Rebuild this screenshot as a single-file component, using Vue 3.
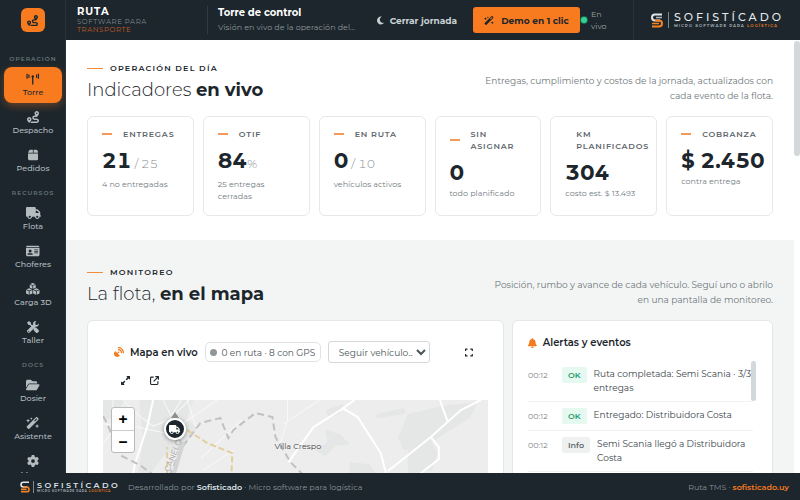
<script setup>
const icons = {
  route: ['0 0 512 512', 'M512 96c0 50.2-59.1 125.1-84.6 155c-3.8 4.4-9.4 6.1-14.5 5H320c-17.7 0-32 14.3-32 32s14.3 32 32 32h96c53 0 96 43 96 96s-43 96-96 96H139.6c8.7-9.9 19.3-22.6 30-36.8c6.3-8.4 12.8-17.6 19-27.2H416c17.7 0 32-14.3 32-32s-14.3-32-32-32H320c-53 0-96-43-96-96s43-96 96-96h39.8c-21-31.5-39.8-67.7-39.8-96c0-53 43-96 96-96s96 43 96 96zM117.1 489.1c-3.8 4.3-7.2 8.1-10.1 11.3l-1.8 2-.2-.2c-6 4.6-14.6 4-20-1.8C59.8 473 0 402.5 0 352c0-53 43-96 96-96s96 43 96 96c0 30-21.1 67-43.5 97.9c-10.7 14.7-21.7 28-30.8 38.5l-.6 .7zM128 352a32 32 0 1 0 -64 0 32 32 0 1 0 64 0zM416 128a32 32 0 1 0 0-64 32 32 0 1 0 0 64z'],
  tower: ['0 0 576 512', 'M20 30h50v210H20zM100 60h50v150h-50zM506 30h50v210h-50zM426 60h50v150h-50zM288 100a56 56 0 0 1 28 104v284h-56V204a56 56 0 0 1 28-104z'],
  box: ['0 0 448 512', 'M50.7 58.5L0 160H208V32H93.7C75.5 32 58.9 42.3 50.7 58.5zM240 160H448L397.3 58.5C389.1 42.3 372.5 32 354.3 32H240V160zm208 32H0V416c0 35.3 28.7 64 64 64H384c35.3 0 64-28.7 64-64V192z'],
  truck: ['0 0 640 512', 'M48 0C21.5 0 0 21.5 0 48V368c0 26.5 21.5 48 48 48H64c0 53 43 96 96 96s96-43 96-96H384c0 53 43 96 96 96s96-43 96-96h32c17.7 0 32-14.3 32-32s-14.3-32-32-32V288 256 237.3c0-17-6.7-33.3-18.7-45.3L512 114.7c-12-12-28.3-18.7-45.3-18.7H416V48c0-26.5-21.5-48-48-48H48zM416 160h50.7L544 237.3V256H416V160zM112 416a48 48 0 1 1 96 0 48 48 0 1 1 -96 0zm368-48a48 48 0 1 1 0 96 48 48 0 1 1 0-96z'],
  card: ['0 0 576 512', 'M64 32C28.7 32 0 60.7 0 96H576c0-35.3-28.7-64-64-64H64zM0 128V416c0 35.3 28.7 64 64 64H512c35.3 0 64-28.7 64-64V128H0zM64 405.3c0-29.5 23.9-53.3 53.3-53.3H234.7c29.5 0 53.3 23.9 53.3 53.3c0 5.9-4.8 10.7-10.7 10.7H74.7c-5.9 0-10.7-4.8-10.7-10.7zM176 192a64 64 0 1 1 0 128 64 64 0 1 1 0-128zm176 16c0-8.8 7.2-16 16-16H496c8.8 0 16 7.2 16 16s-7.2 16-16 16H368c-8.8 0-16-7.2-16-16zm0 64c0-8.8 7.2-16 16-16H496c8.8 0 16 7.2 16 16s-7.2 16-16 16H368c-8.8 0-16-7.2-16-16zm0 64c0-8.8 7.2-16 16-16H496c8.8 0 16 7.2 16 16s-7.2 16-16 16H368c-8.8 0-16-7.2-16-16z'],
  cubes: ['0 0 576 512', 'M288 0l116 44-116 48-116-48zM160 70l112 46v128l-112-46zM416 70v128l-112 46V116zM136 226l120 46-120 50-120-50zM0 300l120 50v150L0 450zM272 300v150l-120 50V350zM440 226l120 46-120 50-120-50zM304 300l120 50v150l-120-50zM576 300v150l-120 50V350z'],
  tools: ['0 0 512 512', 'M78 2L2 78l64 88h58l92 92 42-42-92-92V66zM396 4c-76-14-154 50-136 140L12 392c-34 48 6 116 68 112 14-2 28-8 38-18l244-246c90 18 158-60 142-138l-70 70-68-16-16-68zM76 412a26 26 0 1 1 0 52 26 26 0 0 1 0-52zM292 324l42-42c24-12 54-8 74 12l88 88c22 22 22 52 0 74l-40 40c-20 20-52 20-74 0l-88-88c-22-22-24-58-2-84z'],
  folder: ['0 0 576 512', 'M88.7 223.8L0 375.8V96C0 60.7 28.7 32 64 32H181.5c17 0 33.3 6.7 45.3 18.7l26.5 26.5c12 12 28.3 18.7 45.3 18.7H416c35.3 0 64 28.7 64 64v32H144c-22.8 0-43.8 12.1-55.3 31.8zm27.6 16.1C122.1 230 132.6 224 144 224H544c11.5 0 22 6.1 27.7 16.1s5.7 22.2-.1 32.1l-112 192C453.9 474 443.4 480 432 480H32c-11.5 0-22-6.1-27.7-16.1s-5.7-22.2 .1-32.1l112-192z'],
  wand: ['0 0 576 512', 'M424 12c16-16 40-16 56 0l46 46c16 16 16 40 0 56L144 496c-16 16-40 16-56 0l-46-46c-16-16-16-40 0-56zM452 54l-106 106 32 32L484 86zM224 10l18 44 46 18-46 18-18 46-18-46-46-18 46-18zM88 70l26 58 62 24-62 26-26 62-24-62-64-26 64-24zM472 300l26 62 62 26-62 24-26 64-26-64-62-24 62-26z'],
  gear: ['0 0 512 512', 'M495.9 166.6c3.2 8.7 .5 18.4-6.4 24.6l-43.3 39.4c1.1 8.3 1.7 16.8 1.7 25.4s-.6 17.1-1.7 25.4l43.3 39.4c6.9 6.2 9.6 15.9 6.4 24.6c-4.4 11.9-9.7 23.3-15.8 34.3l-4.7 8.1c-6.6 11-14 21.4-22.1 31.2c-5.9 7.2-15.7 9.6-24.5 6.8l-55.7-17.7c-13.4 10.3-28.2 18.9-44 25.4l-12.5 57.1c-2 9.1-9 16.3-18.2 17.8c-13.8 2.3-28 3.5-42.5 3.5s-28.7-1.2-42.5-3.5c-9.2-1.5-16.2-8.7-18.2-17.8l-12.5-57.1c-15.8-6.5-30.6-15.1-44-25.4L83.1 425.9c-8.8 2.8-18.6 .3-24.5-6.8c-8.1-9.8-15.5-20.2-22.1-31.2l-4.7-8.1c-6.1-11-11.4-22.4-15.8-34.3c-3.2-8.7-.5-18.4 6.4-24.6l43.3-39.4C64.6 273.1 64 264.6 64 256s.6-17.1 1.7-25.4L22.4 191.2c-6.9-6.2-9.6-15.9-6.4-24.6c4.4-11.9 9.7-23.3 15.8-34.3l4.7-8.1c6.6-11 14-21.4 22.1-31.2c5.9-7.2 15.7-9.6 24.5-6.8l55.7 17.7c13.4-10.3 28.2-18.9 44-25.4l12.5-57.1c2-9.1 9-16.3 18.2-17.8C227.3 1.2 241.5 0 256 0s28.7 1.2 42.5 3.5c9.2 1.5 16.2 8.7 18.2 17.8l12.5 57.1c15.8 6.5 30.6 15.1 44 25.4l55.7-17.7c8.8-2.8 18.6-.3 24.5 6.8c8.1 9.8 15.5 20.2 22.1 31.2l4.7 8.1c6.1 11 11.4 22.4 15.8 34.3zM256 336a80 80 0 1 0 0-160 80 80 0 1 0 0 160z'],
  moon: ['0 0 384 512', 'M223.5 32C100 32 0 132.3 0 256S100 480 223.5 480c60.6 0 115.5-24.2 155.8-63.4c5-4.9 6.3-12.5 3.1-18.7s-10.1-9.7-17-8.5c-9.8 1.7-19.8 2.6-30.1 2.6c-96.9 0-175.5-78.8-175.5-176c0-65.8 36-123.1 89.3-153.3c6.1-3.5 9.2-10.5 7.7-17.3s-7.3-11.9-14.3-12.5c-6.3-.5-12.6-.8-19-.8z'],
  bell: ['0 0 448 512', 'M224 0c-17.7 0-32 14.3-32 32V51.2C119 66 64 130.6 64 208v18.8c0 47-17.3 92.4-48.5 127.6l-7.4 8.3c-8.4 9.4-10.4 22.9-5.3 34.4S19.4 416 32 416H416c12.6 0 24-7.4 29.2-18.9s3.1-25-5.3-34.4l-7.4-8.3C401.3 319.2 384 273.9 384 226.8V208c0-77.4-55-142-128-156.8V32c0-17.7-14.3-32-32-32zm45.3 493.3c12-12 18.7-28.3 18.7-45.3H224 160c0 17 6.7 33.3 18.7 45.3s28.3 18.7 45.3 18.7s33.3-6.7 45.3-18.7z'],
  dish: ['0 0 512 512', 'M60 200c-80 84-80 200-10 262 72 68 182 58 258-10L198 342l30-32a42 42 0 1 0-30-28l-30 30zM192 32c0-20 14-32 32-32 160 0 288 128 288 288 0 18-14 32-32 32s-32-14-32-32C448 164 348 64 224 64c-18 0-32-14-32-32zM192 128c0-18 14-32 32-32 106 0 192 86 192 192 0 18-14 32-32 32s-32-14-32-32c0-70-58-128-128-128-18 0-32-14-32-32z'],
  corners: ['0 0 448 512', 'M0 64q0-32 32-32h112v64H64v80H0zM304 32h112q32 0 32 32v112h-64V96h-80zM0 336h64v80h80v64H32q-32 0-32-32zM384 336h64v112q0 32-32 32H304v-64h80z'],
  arrows: ['0 0 512 512', 'M344 0h144c14 0 24 10 24 24v144c0 22-26 32-42 16l-38-38-88 88c-10 10-24 10-34 0l-32-32c-10-10-10-24 0-34l88-88-38-38c-16-16-6-42 16-42zM168 512H24c-14 0-24-10-24-24V344c0-22 26-32 42-16l38 38 88-88c10-10 24-10 34 0l32 32c10 10 10 24 0 34l-88 88 38 38c16 16 6 42-16 42z'],
  external: ['0 0 512 512', 'M304 0h176q32 0 32 32v176h-64v-98L230 328l-46-46L402 64h-98zM80 32h128v64H80q-16 0-16 16v320q0 16 16 16h320q16 0 16-16V304h64v128q0 80-80 80H80q-80 0-80-80V112q0-80 80-80z']
}

const groups = [
  { title: 'Operación', items: [['tower', 'Torre'], ['route', 'Despacho'], ['box', 'Pedidos']] },
  { title: 'Recursos', items: [['truck', 'Flota'], ['card', 'Choferes'], ['cubes', 'Carga 3D'], ['tools', 'Taller']] },
  { title: 'Docs', items: [['folder', 'Dosier'], ['wand', 'Asistente'], ['gear', 'Marca']] }
]

const kpis = [
  { label: 'Entregas', value: '21', unit: '/ 25', note: '4 no entregadas', spaced: true },
  { label: 'OTIF', value: '84', unit: '%', note: '25 entregas cerradas' },
  { label: 'En ruta', value: '0', unit: '/ 10', note: 'vehículos activos', spaced: true },
  { label: 'Sin asignar', value: '0', note: 'todo planificado' },
  { label: 'Km planificados', value: '304', note: 'costo est. $ 13.493', plain: true },
  { label: 'Cobranza', value: '$ 2.450', note: 'contra entrega' }
]

const events = [
  { time: '00:12', kind: 'OK', text: 'Ruta completada: Semi Scania · 3/3 entregas' },
  { time: '00:12', kind: 'OK', text: 'Entregado: Distribuidora Costa' },
  { time: '00:12', kind: 'Info', text: 'Semi Scania llegó a Distribuidora Costa' }
]
</script>

<template>
  <div class="app">
    <div class="body">
      <aside class="side">
        <a class="home" href="#" aria-label="Ruta">
          <svg class="ico" :viewBox="icons.route[0]"><path :d="icons.route[1]" /></svg>
        </a>
        <nav class="nav">
          <template v-for="g in groups" :key="g.title">
            <span class="group">{{ g.title }}</span>
            <a v-for="[icon, name] in g.items" :key="name" href="#" class="item" :class="{ active: name === 'Torre' }">
              <svg class="ico" :viewBox="icons[icon][0]"><path :d="icons[icon][1]" /></svg>
              <span>{{ name }}</span>
            </a>
          </template>
        </nav>
      </aside>

      <div class="column">
        <header class="top">
          <div class="brand">
            <strong>RUTA</strong>
            <span>SOFTWARE PARA</span>
            <em>TRANSPORTE</em>
          </div>
          <div class="where">
            <h1>Torre de control</h1>
            <p>Visión en vivo de la operación del…</p>
          </div>
          <button class="ghost" type="button">
            <svg class="ico" :viewBox="icons.moon[0]"><path :d="icons.moon[1]" /></svg>Cerrar jornada
          </button>
          <button class="demo" type="button">
            <svg class="ico" :viewBox="icons.wand[0]"><path :d="icons.wand[1]" /></svg>Demo en 1 clic
          </button>
          <div class="live"><i></i><span>En vivo</span></div>
          <a class="logo" href="#">
            <svg class="mark" viewBox="0 0 24 30" fill="none" stroke-width="4">
              <path d="M22 3H8Q2 3 2 9t6 6h10" stroke="#dfe5e8" />
              <path d="M22 9H10" stroke="#aeb8bd" stroke-width="3" />
              <path d="M8 15h8q6 0 6 6t-6 6H2" stroke="#f58220" />
              <path d="M2 21h14" stroke="#f58220" stroke-width="3" />
            </svg>
            <span class="words"><b>SOFISTÍCADO</b><small>MICRO SOFTWARE PARA <em>LOGÍSTICA</em></small></span>
          </a>
        </header>

        <div class="frame">
          <main class="main">
            <section class="section">
              <div class="head">
                <div>
                  <p class="eyebrow">Operación del día</p>
                  <h2>Indicadores <b>en vivo</b></h2>
                </div>
                <p class="lead">Entregas, cumplimiento y costos de la jornada, actualizados con cada evento de la flota.</p>
              </div>
              <div class="kpis">
                <article v-for="k in kpis" :key="k.label" class="kpi">
                  <h3 :class="{ plain: k.plain }"><span>{{ k.label }}</span></h3>
                  <p class="value">{{ k.value }}<small v-if="k.unit" :class="{ spaced: k.spaced }">{{ k.unit }}</small></p>
                  <p class="note">{{ k.note }}</p>
                </article>
              </div>
            </section>

            <section class="section tinted">
              <div class="head">
                <div>
                  <p class="eyebrow">Monitoreo</p>
                  <h2>La flota, <b>en el mapa</b></h2>
                </div>
                <p class="lead">Posición, rumbo y avance de cada vehículo. Seguí uno o abrilo en una pantalla de monitoreo.</p>
              </div>
              <div class="panels">
                <article class="panel">
                  <div class="tools">
                    <h3><svg class="ico accent" :viewBox="icons.dish[0]"><path :d="icons.dish[1]" /></svg>Mapa en vivo</h3>
                    <span class="chip"><i></i>0 en ruta · 8 con GPS</span>
                    <select aria-label="Seguir vehículo"><option>Seguir vehículo…</option></select>
                    <button class="tool push" type="button" aria-label="Encuadrar"><svg class="ico" :viewBox="icons.corners[0]"><path :d="icons.corners[1]" /></svg></button>
                    <button class="tool" type="button" aria-label="Ampliar"><svg class="ico" :viewBox="icons.arrows[0]"><path :d="icons.arrows[1]" /></svg></button>
                    <button class="tool" type="button" aria-label="Abrir"><svg class="ico" :viewBox="icons.external[0]"><path :d="icons.external[1]" /></svg></button>
                  </div>
                  <div class="map">
                    <svg class="tiles" viewBox="0 0 384 140" preserveAspectRatio="xMidYMin slice" fill="none">
                      <rect width="384" height="140" fill="#ededed" />
                      <g fill="#e5e6e6">
                        <path d="M36 0h54l-6 18 10 12-14 16-20 10-16 22H34l6-36zM304 14l34-8 36-4-8 16-26 16-14 10-26 6-6-12zM304 50l24-8 6 10-6 18-24 4zM302 14l-30 4 2-4 26-6zM222 30l14 4 10 10-14 2-10 10-10-6 12-8zM222 10l18-6-4 10-10 4z" />
                        <path d="M0 0h22L10 18 0 20zM246 62l20 2 8 12h-28z" />
                      </g>
                      <g stroke="#f8f8f8" stroke-width="1">
                        <path d="M20 0l14 14 16 12 16-6L86 0M60 0l8 16L78 0M0 24l30 2 36 8M64 34l50-34M98 58l40-38M100 70l30-20M184 0v20l-8 26M216 0l-36 24M10 0v30L0 44M84 0l10 30" />
                      </g>
                      <g stroke="#fff" stroke-width="2">
                        <path d="M50 0L44 27 32 63l-4 20M185 62l25-35L237 10l14-10M239 8l15 9 23 36 5 19v20M284 71l43-34 30-27 20-10M327 37l8 10v12l-18 14M336 0l8 22" />
                      </g>
                      <g stroke="#c0c2c2" stroke-width="2" stroke-dasharray="7 4">
                        <path d="M0 16l4 7 13 32 20 10 16 12M66 76l13-29 18-24 20-5 8 20 5-8 22-17 17 4 3 20 15 25 16 16" />
                      </g>
                      <path d="M64 76V47M84 30l20 13 25 10-1 24" stroke="#e3cf9e" stroke-width="2" stroke-dasharray="6 3" />
                      <path d="M70 76l10-34" stroke="#d2d3d3" stroke-width="4" />
                      <text x="171" y="49" font-size="8" fill="#444">Villa Crespo</text>
                      <text x="66" y="72" font-size="8" fill="#a2a2a2" transform="rotate(-68 66 72)">CANELO</text>
                    </svg>
                    <div class="zoom"><button type="button">+</button><button type="button">−</button></div>
                    <div class="pin"><svg class="ico" :viewBox="icons.truck[0]"><path :d="icons.truck[1]" /></svg></div>
                  </div>
                </article>

                <article class="panel alerts">
                  <h3><svg class="ico accent" :viewBox="icons.bell[0]"><path :d="icons.bell[1]" /></svg>Alertas y eventos</h3>
                  <ul>
                    <li v-for="(e, n) in events" :key="n">
                      <time>{{ e.time }}</time>
                      <span class="badge" :class="{ ok: e.kind === 'OK' }">{{ e.kind }}</span>
                      <p>{{ e.text }}</p>
                    </li>
                  </ul>
                  <i class="thumb"></i>
                </article>
              </div>
            </section>
          </main>
          <i class="thumb"></i>
        </div>
      </div>
    </div>

    <footer class="foot">
      <a class="logo small" href="#">
        <svg class="mark" viewBox="0 0 24 30" fill="none" stroke-width="4">
          <path d="M22 3H8Q2 3 2 9t6 6h10" stroke="#dfe5e8" />
          <path d="M8 15h8q6 0 6 6t-6 6H2M2 21h14" stroke="#f58220" />
        </svg>
        <span class="words"><b>SOFISTÍCADO</b><small>MICRO SOFTWARE PARA <em>LOGÍSTICA</em></small></span>
      </a>
      <p>Desarrollado por <b>Sofisticado</b> · Micro software para logística</p>
      <p class="right">Ruta TMS · <a href="#">sofisticado.uy</a></p>
    </footer>
  </div>
</template>

<style>
body { margin: 0; }
</style>

<style scoped>
* { box-sizing: border-box; }
.app { height: 100vh; display: flex; flex-direction: column; overflow: hidden; background: #fff; color: #1c262c; font-family: Montserrat, Inter, sans-serif; font-size: 9px; }
h1, h2, h3, p, ul { margin: 0; padding: 0; }
em, i { font-style: normal; }
a { color: inherit; text-decoration: none; }
button, select { font: inherit; color: inherit; }
button { border: 0; background: none; padding: 0; }
.ico { display: block; height: 12px; fill: currentColor; flex: none; }
.accent { color: #f47a20; }

.body { flex: 1; min-height: 0; display: flex; }
.side { width: 66px; flex: none; background: #1c262c; border-right: 1px solid #2a343a; color: #b4bcc0; display: flex; flex-direction: column; align-items: center; overflow: hidden; }
.home { width: 24px; height: 24px; margin: 8px 0; border-radius: 6px; background: #f97b1f; color: #1c262c; display: grid; place-items: center; flex: none; }
.home .ico { height: 11px; }
.nav { width: 100%; padding: 7px 3px 7px 4px; display: flex; flex-direction: column; gap: 2px; }
.group { flex: none; padding-top: 6px; line-height: 12px; font-size: 6px; font-weight: 600; letter-spacing: 1px; text-align: center; text-transform: uppercase; color: #69757b; }
.item { flex: none; height: 36px; border-radius: 8px; display: flex; flex-direction: column; align-items: center; justify-content: center; gap: 2px; font-size: 8px; line-height: 11px; font-weight: 500; }
.active { background: #f97b1f; color: #1c262c; box-shadow: 0 3px 8px #f97b1f55; }

.column { flex: 1; min-width: 0; display: flex; flex-direction: column; }
.top { height: 40px; flex: none; display: flex; align-items: center; background: #1c262c; color: #fff; }
.brand { width: 142px; flex: none; height: 28px; padding-left: 11px; border-right: 1px solid #303a40; display: flex; flex-direction: column; justify-content: center; font-size: 7px; line-height: 8px; letter-spacing: .08em; color: #7e888d; }
.brand strong { font-size: 10px; line-height: 12px; letter-spacing: 1px; color: #fff; }
.brand em { color: #c25b25; }
.where { flex: 1; min-width: 0; padding: 0 6px 0 10px; }
.where h1 { font-size: 10px; line-height: 14px; font-weight: 700; }
.where p { font-size: 8px; line-height: 14px; color: #8d979c; white-space: nowrap; }
.ghost, .demo { display: flex; align-items: center; white-space: nowrap; font-size: 9px; font-weight: 700; }
.ghost { width: 96px; gap: 6px; color: #c9d0d3; }
.ghost .ico { height: 9px; }
.demo { width: 107px; height: 26px; justify-content: center; gap: 7px; border-radius: 3px; background: #f97b1f; color: #1c262c; }
.demo .ico { height: 9px; }
.live { width: 54px; height: 40px; padding-left: 1px; border-right: 1px solid #28333a; display: flex; align-items: center; gap: 4px; font-size: 8px; line-height: 12px; color: #9aa4a8; }
.live i { width: 6px; height: 6px; flex: none; border-radius: 50%; background: #38cf95; box-shadow: 0 0 0 1px #14694f; }
.live span { width: 20px; }
.logo { flex: none; padding: 0 16px 0 17px; display: flex; align-items: center; gap: 5px; color: #e6eaec; }
.mark { width: 12px; height: 15px; flex: none; }
.words { border-left: 1px solid #7e888d; padding-left: 5px; display: flex; flex-direction: column; }
.words b { font-size: 11px; line-height: 11px; font-weight: 500; letter-spacing: 3px; }
.words small { font-size: 4px; line-height: 5px; font-weight: 600; letter-spacing: 1px; color: #b4bcc0; }
.words em { color: #f58220; }

.frame { position: relative; flex: 1; min-height: 0; padding-right: 6px; display: flex; }
.main { flex: 1; min-width: 0; overflow: hidden; }
.thumb { position: absolute; top: 1px; right: 0; width: 6px; height: 115px; border-radius: 3px; background: #d3d8db; }
.section { padding: 21px 21px 24px; }
.tinted { background: #f3f5f5; padding-top: 25px; }
.head { display: flex; justify-content: space-between; align-items: flex-end; margin-bottom: 11px; }
.eyebrow { display: flex; align-items: center; gap: 7px; font-size: 8px; line-height: 14px; font-weight: 600; letter-spacing: .15em; text-transform: uppercase; }
.eyebrow::before { content: ''; width: 16px; height: 1px; background: #f08a3c; }
h2 { font-size: 18px; line-height: 30px; font-weight: 300; }
h2 b { font-weight: 700; }
.lead { width: 290px; padding-bottom: 2px; font-size: 9px; line-height: 15px; text-align: right; color: #6d7579; }
.kpis { display: grid; grid-template-columns: repeat(6, minmax(0, 1fr)); gap: 9px; }
.kpi { min-height: 100px; padding: 11px 14px 6px; border: 1px solid #e6e9ea; border-radius: 6px; background: #fff; }
.kpi h3 { display: flex; align-items: center; gap: 11px; font-size: 8px; line-height: 12px; font-weight: 600; letter-spacing: .1em; text-transform: uppercase; color: #5d666b; }
.kpi h3::before { content: ''; width: 10px; height: 2px; flex: none; background: #f39a58; }
.kpi h3.plain::before { width: 0; }
.value { margin-top: 7px; font-size: 21px; line-height: 28px; font-weight: 700; font-variant-numeric: tabular-nums; white-space: nowrap; }
.value small { font-size: 12px; font-weight: 300; color: #858d91; }
.value .spaced { margin-left: 3px; }
.note { font-size: 8px; line-height: 12px; color: #737b7f; }

.panels { display: grid; grid-template-columns: 417fr 261fr; gap: 8px; }
.panel { position: relative; min-width: 0; padding: 15px; border: 1px solid #e3e7e8; border-radius: 6px; background: #fff; }
.panel h3 { display: flex; align-items: center; gap: 6px; font-size: 10px; font-weight: 600; white-space: nowrap; }
.panel h3 .ico { height: 10px; }
.tools { padding: 5px 8px 9px 11px; display: flex; flex-wrap: wrap; align-items: center; gap: 7px; }
.chip { width: 116px; height: 20px; border: 1px solid #dfe3e5; border-radius: 5px; display: flex; align-items: center; justify-content: center; gap: 4px; font-size: 9px; white-space: nowrap; color: #4a5358; }
.chip i { width: 7px; height: 7px; border-radius: 50%; background: #909799; }
.tools select { width: 102px; height: 22px; padding: 0 0 0 6px; border: 1px solid #d4d8da; border-radius: 3px; background: #fff; color: #4a5358; }
.tool { width: 22px; height: 21px; display: grid; place-items: center; }
.tool .ico { height: 9px; }
.push { margin-left: 21px; }
.map { position: relative; height: 140px; background: #ececec; }
.tiles { display: block; width: 100%; height: 100%; }
.zoom { position: absolute; left: 8px; top: 7px; width: 24px; border: 1px solid #b9bbbb; border-radius: 3px; background: #fff; display: flex; flex-direction: column; }
.zoom button { height: 22px; font-size: 17px; line-height: 20px; font-weight: 600; color: #000; }
.zoom button + button { border-top: 1px solid #ccc; }
.pin { position: absolute; left: 61px; top: 18px; width: 22px; height: 22px; border: 2px solid #fff; border-radius: 50%; background: #1c262c; color: #fff; display: grid; place-items: center; box-shadow: 0 1px 4px #0006; }
.pin::before { content: ''; position: absolute; left: 5px; top: -8px; border: 4px solid transparent; border-top: 0; border-bottom: 6px solid #8d8f8f; }
.pin .ico { height: 9px; }
.alerts h3 { line-height: 14px; }
.alerts .thumb { top: 40px; right: 16px; width: 5px; height: 40px; }
.alerts ul { margin-top: 11px; padding-right: 4px; list-style: none; }
.alerts li { display: flex; align-items: flex-start; gap: 7px; padding: 6px 0; border-bottom: 1px solid #f0f2f3; }
.alerts time { width: 27px; font-size: 8px; line-height: 16px; color: #7d8589; }
.alerts li p { flex: 1; font-size: 9px; line-height: 14px; color: #3a444a; }
.badge { padding: 0 6px; border-radius: 2px; background: #eff1f1; color: #5d666b; font-size: 8px; line-height: 16px; font-weight: 600; }
.ok { background: #e5f9f1; color: #219b70; }

.foot { height: 27px; flex: none; padding: 0 11px 0 4px; display: flex; align-items: center; background: #1c262c; color: #87929a; font-size: 8px; }
.foot b { color: #dfe5e8; font-weight: 600; }
.foot .right { margin-left: auto; }
.right a { color: #f97b1f; font-weight: 600; }
.small { padding: 0 8px 0 16px; gap: 3px; }
.small .mark { width: 10px; height: 12px; }
.small .words { padding-left: 3px; }
.small b { font-size: 8px; line-height: 8px; letter-spacing: .3em; color: #dfe5e8; }
.small small { font-size: 3px; line-height: 4px; letter-spacing: .2em; }
</style>
